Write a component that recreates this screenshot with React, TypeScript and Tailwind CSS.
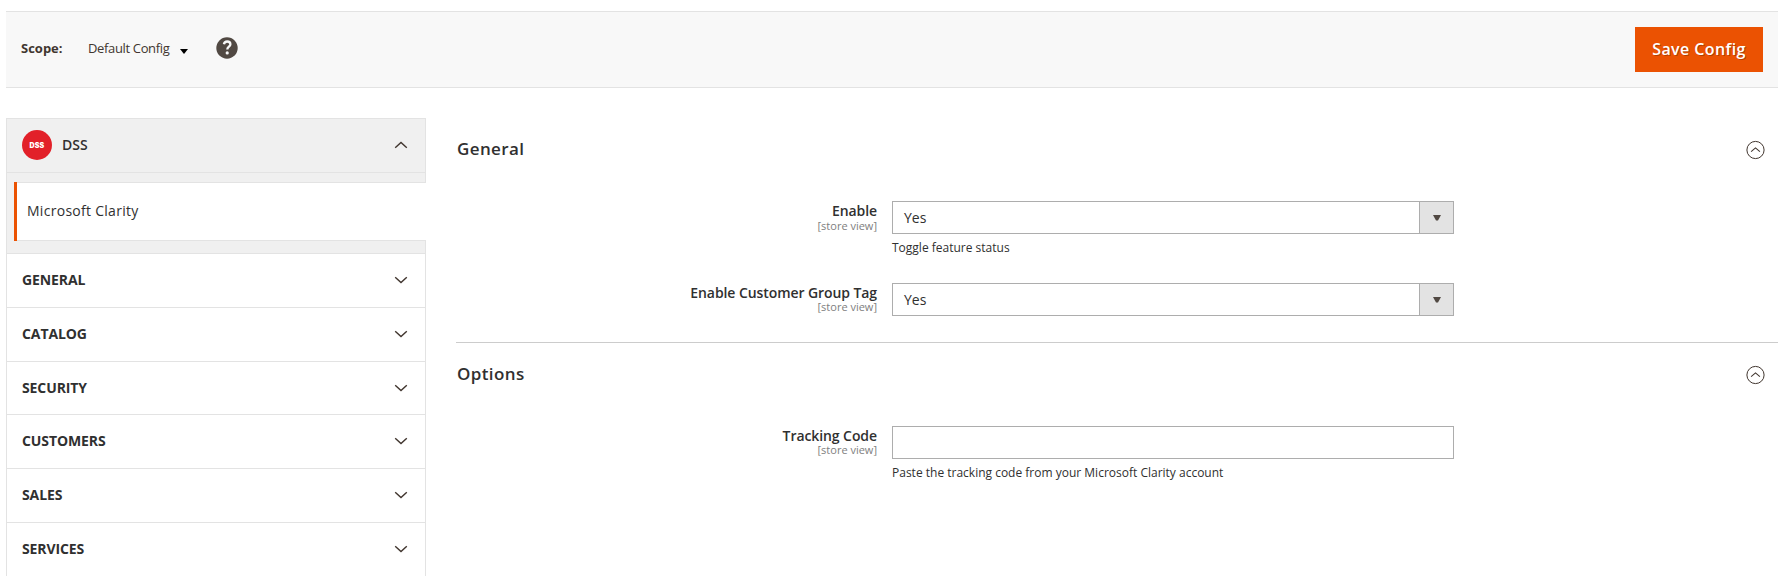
import type { ReactNode } from "react";

const sections = ["GENERAL", "CATALOG", "SECURITY", "CUSTOMERS", "SALES", "SERVICES"];
const rowHeights = ["h-[54px]", "h-[54px]", "h-[53px] pt-px", "h-[54px]", "h-[54px]", "h-[54px]"];

function Chevron({ up = false }: { up?: boolean }) {
  return (
    <svg width="14" height="8" viewBox="0 0 14 8" fill="none" stroke="#41362f" strokeWidth="1.4">
      <path d={up ? "M1.2 6.8 7 1.4l5.800 5.400" : "M1.2 1.200 7 6.600l5.800-5.400"} />
    </svg>
  );
}

function CollapseIcon() {
  return (
    <svg width="20" height="20" viewBox="0 0 20 20" fill="none" stroke="#41362f">
      <circle cx="10.5" cy="10" r="8.6" strokeWidth="1" />
      <path d="M6.100 11.600 10.500 7.900l4.400 3.700" strokeWidth="1.1" />
    </svg>
  );
}

function Group({ title, children }: { title: string; children: ReactNode }) {
  return (
    <section>
      <div className="flex h-[60px] items-center justify-between pr-[13px]">
        <h2 className="pb-[2px] pl-px text-[17px] leading-6 font-semibold tracking-[0.38px] text-[#303030]">{title}</h2>
        <CollapseIcon />
      </div>
      {children}
    </section>
  );
}

function Field({ label, note, scopeGap = false, children }: { label: string; note?: string; scopeGap?: boolean; children: ReactNode }) {
  return (
    <div className="flex">
      <div className="mr-[15px] w-[421px] text-right">
        <div className="text-[14px] leading-[19px] font-semibold tracking-[-0.08px] text-[#303030]">{label}</div>
        <div className={`${scopeGap ? "pt-px" : ""} text-[11px] leading-[10px] text-[#808080]`}>[store view]</div>
      </div>
      <div className="w-[562px]">
        {children}
        {note && <p className="mt-[5px] text-[12px] leading-[17px] text-[#303030]">{note}</p>}
      </div>
    </div>
  );
}

function Select() {
  return (
    <div className="flex h-[33px] border border-[#adadad] bg-white">
      <span className="flex-1 pl-[11px] text-[14px] leading-[31px] text-[#303030]">Yes</span>
      <span className="flex w-[34px] items-center justify-center border-l border-[#adadad] bg-[#e3e3e3]">
        <svg width="8" height="6" viewBox="0 0 8 6">
          <path d="M0 0h8L5 5.500H3z" fill="#514943" />
        </svg>
      </span>
    </div>
  );
}

export default function App() {
  return (
    <div className="h-[576px] overflow-hidden bg-white pt-[11px] pr-[3px] pl-[6px] font-['Open_Sans',sans-serif] text-[#303030]">
      <header className="flex h-[77px] items-center border-y border-[#e3e3e3] bg-[#f8f8f8] pr-[15px] pl-[15px]">
        <span className="w-[67px] pb-[3px] text-[13px] leading-4 font-bold text-[#41362f]">Scope:</span>
        <span className="pb-[3px] text-[13px] leading-4 tracking-[-0.35px] text-[#41362f]">Default Config</span>
        <svg className="mt-[3px] ml-[11px]" width="8" height="5" viewBox="0 0 8 5">
          <path d="M0 0h8L4 5z" fill="#000" />
        </svg>
        <svg className="mb-[3px] ml-7" width="22" height="22" viewBox="0 0 22 22">
          <circle cx="11" cy="11" r="10.700" fill="#514943" />
          <path d="M7.900 7.300C8.300 5.300 9.500 4.500 11.200 4.500c2 0 3.200 1.100 3.200 2.700 0 2.500-3.100 2.500-3.100 5.300" fill="none" stroke="#f8f8f8" strokeWidth="2.300" />
          <circle cx="11.200" cy="15.900" r="1.600" fill="#f8f8f8" />
        </svg>
        <button className="ml-auto h-[45px] w-[128px] bg-[#eb5202] pb-[2px] text-[16px] font-semibold tracking-[0.4px] text-white [text-shadow:1px_1px_0_rgba(0,0,0,0.25)]">
          Save Config
        </button>
      </header>

      <div className="mt-[30px] flex">
        <nav className="w-[420px] shrink-0">
          <div className="border border-[#e3e3e3] bg-[#f0f0f0]">
            <div className="flex h-[53px] items-center pr-[17px] pb-px pl-[15px]">
              <span className="mr-[10px] flex size-[30px] items-center justify-center rounded-full bg-[#e22029] pt-px font-[Inter,sans-serif] text-[7px] leading-[9px] font-black tracking-[0.2px] text-white">
                DSS
              </span>
              <span className="flex-1 pb-[2px] text-[14px] font-semibold">DSS</span>
              <Chevron up />
            </div>
          </div>
          <div className="h-[9px] border-x border-[#e3e3e3] bg-[#f0f0f0]" />
          <div className="flex h-[59px] border-l border-[#e3e3e3] bg-[#f0f0f0] pl-[7px]">
            <div className="flex flex-1 border-l-3 border-[#eb5202] bg-white">
              <div className="flex flex-1 items-center border-y border-[#e3e3e3] pb-[2px] pl-[10px] text-[14px] font-medium tracking-[0.28px]">
                Microsoft Clarity
              </div>
            </div>
          </div>
          <div className="h-3 border-x border-[#e3e3e3] bg-[#f0f0f0]" />
          {sections.map((name, i) => (
            <div
              key={name}
              className={`${rowHeights[i]} flex items-center justify-between border-x border-t border-[#e3e3e3] pr-[17px] pb-px pl-[15px]`}
            >
              <span className="pb-px text-[14px] leading-5 font-bold tracking-[-0.1px]">{name}</span>
              <Chevron />
            </div>
          ))}
        </nav>

        <main className="ml-[30px] flex-1">
          <div className="h-[225px] border-b border-[#cccccc] pt-[2px]">
            <Group title="General">
              <div className="flex flex-col gap-[27px] pt-[21px]">
                <Field label="Enable" note="Toggle feature status" scopeGap>
                  <Select />
                </Field>
                <Field label="Enable Customer Group Tag">
                  <Select />
                </Field>
              </div>
            </Group>
          </div>
          <div className="pt-[2px]">
            <Group title="Options">
              <div className="pt-[21px]">
                <Field label="Tracking Code" note="Paste the tracking code from your Microsoft Clarity account">
                  <input aria-label="Tracking Code" className="block h-[33px] w-full border border-[#adadad] bg-white px-[10px] text-[14px]" />
                </Field>
              </div>
            </Group>
          </div>
        </main>
      </div>
    </div>
  );
}
